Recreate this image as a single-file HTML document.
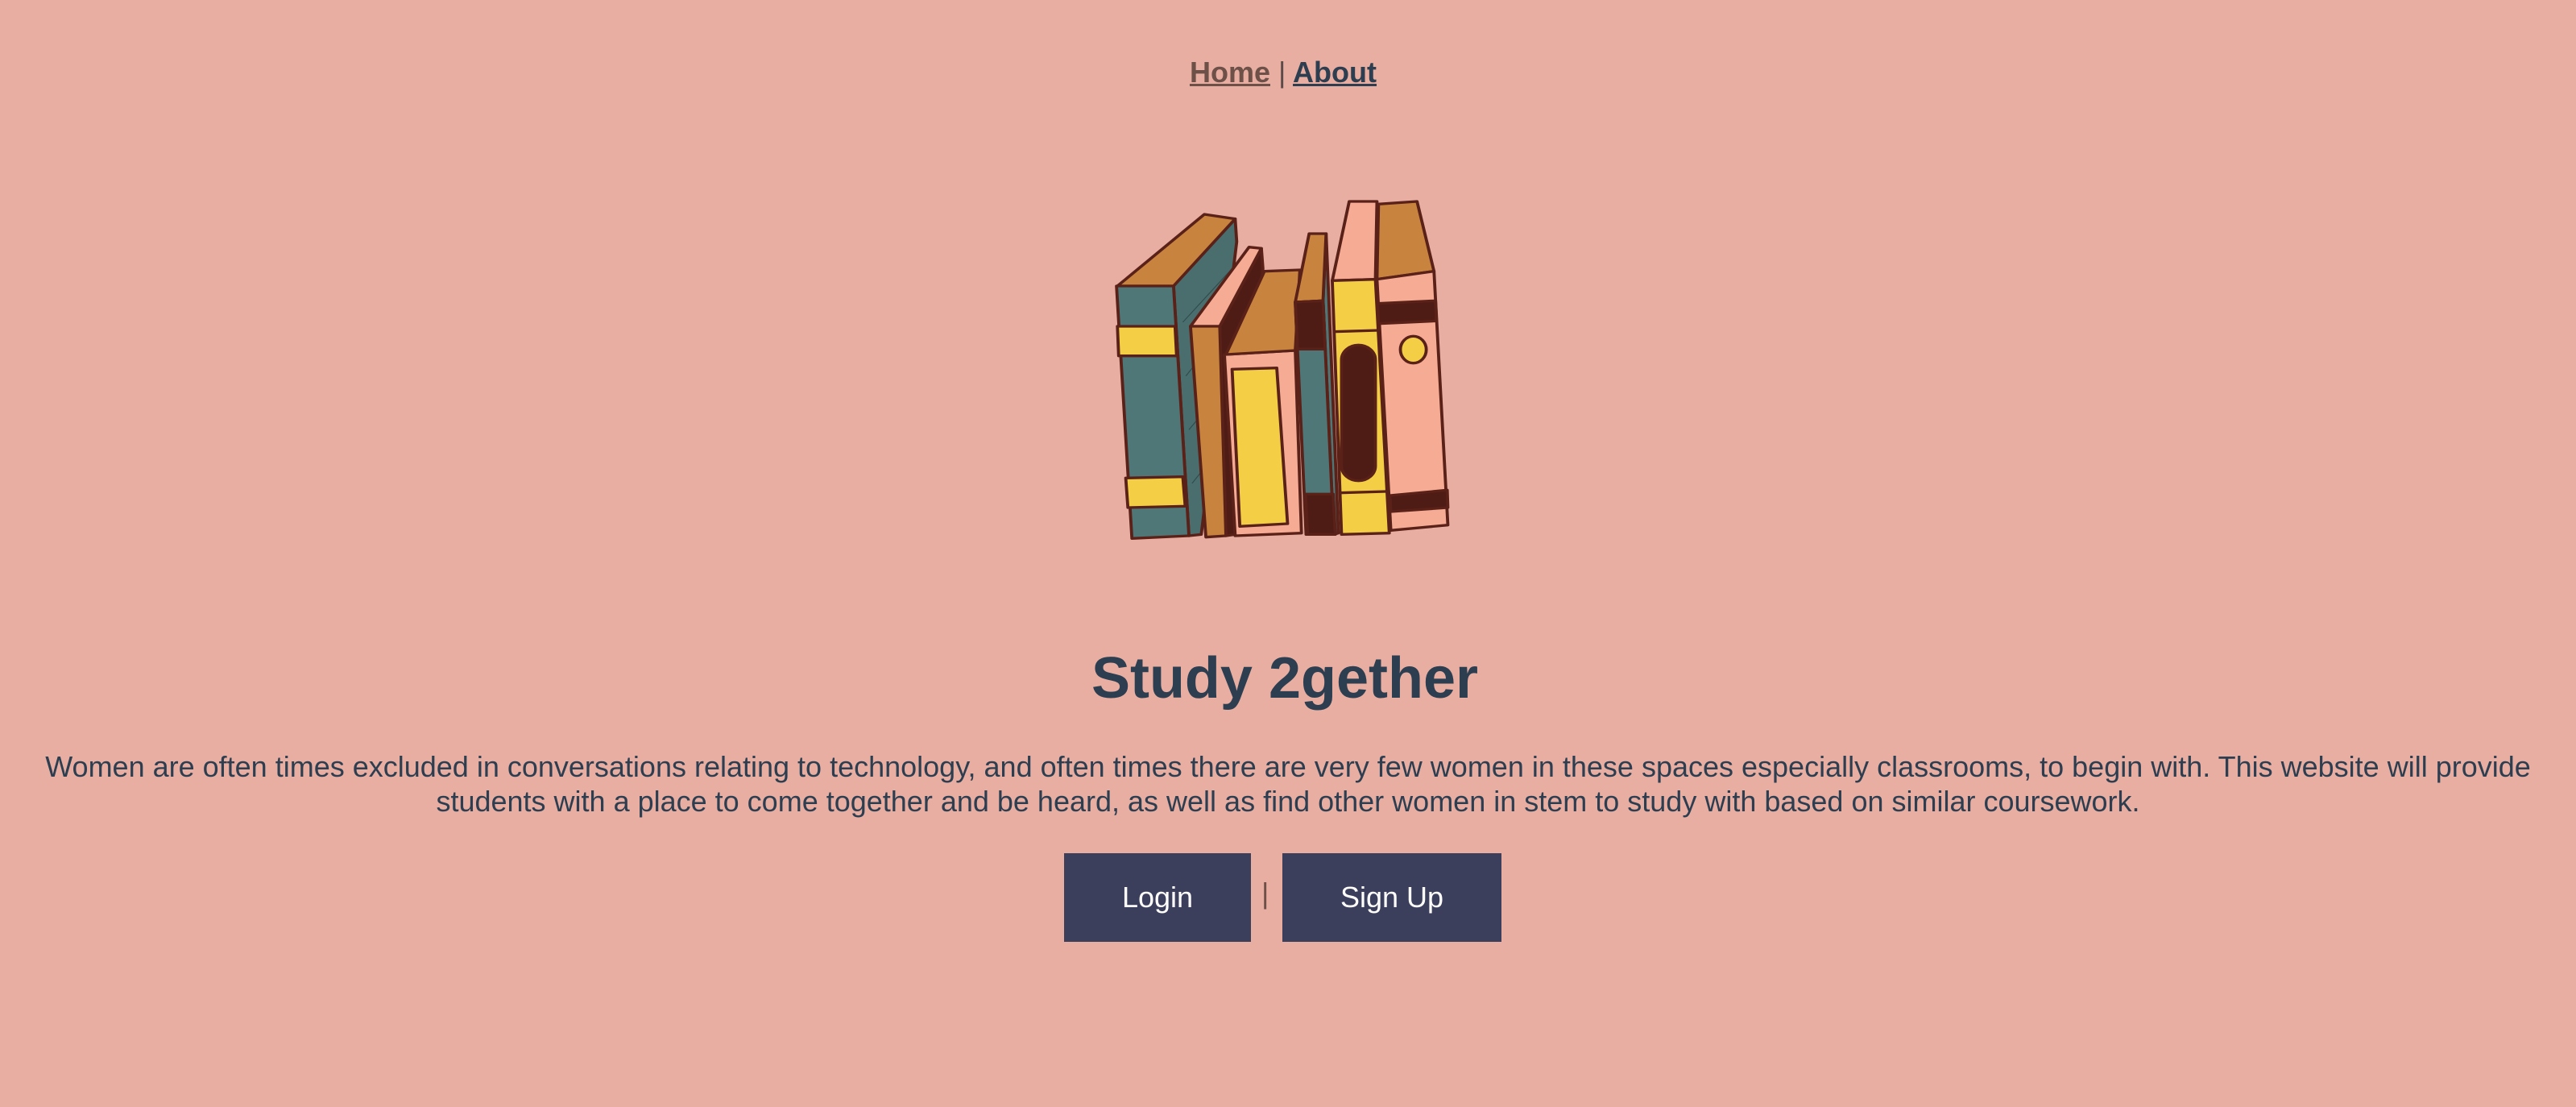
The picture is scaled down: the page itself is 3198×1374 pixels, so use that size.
<!DOCTYPE html>
<html><head><meta charset="utf-8"><style>
html,body{margin:0;padding:0;}
body{width:3198px;height:1374px;background:#e8aea2;font-family:"Liberation Sans",Arial,sans-serif;position:relative;overflow:hidden;color:#2c3e50;}
.nav{position:absolute;top:68px;left:-6px;width:3198px;text-align:center;font-size:36px;font-weight:bold;line-height:44px;color:#5a4a48;}
.nav a{text-decoration:underline;text-decoration-thickness:3px;}
.home{color:#6d5048;}
.about{color:#2c3e50;}
.sep{font-weight:normal;color:#5a4a48;}
h1{position:absolute;top:800px;left:-4px;width:3198px;margin:0;text-align:center;font-size:72px;line-height:84px;font-weight:bold;color:#2c3e50;}
p{position:absolute;top:930px;left:20px;width:3158px;margin:0;text-align:center;font-size:36px;line-height:43px;color:#2c3e50;}
.btn{position:absolute;top:1059px;height:110px;background:#3b3f5b;color:#fff;font-size:36px;line-height:110px;text-align:center;}
.bar{position:absolute;top:1088px;left:1566px;font-size:36px;color:#6d5048;}
</style></head><body>
<div class="nav"><a class="home">Home</a> <span class="sep">|</span> <a class="about">About</a></div>
<svg style="position:absolute;left:1300px;top:200px" width="600" height="500" viewBox="0 0 1568 1500" preserveAspectRatio="none">
<g stroke="#5a2119" stroke-width="10" stroke-linejoin="round">
<polygon points="410,465 610,215 615,300 500,1390 460,1395" fill="#4a6e6e"/>
<g stroke-width="3" stroke="#2f4a4a"><line x1="440" y1="600" x2="600" y2="400"/><line x1="450" y1="800" x2="590" y2="600"/><line x1="460" y1="1000" x2="570" y2="850"/><line x1="470" y1="1200" x2="540" y2="1100"/></g>
<polygon points="228,465 510,198 610,215 410,465" fill="#c8843e"/>
<polygon points="225,465 410,465 460,1395 275,1405" fill="#4f7777"/>
<polygon points="228,615 415,615 420,725 232,725" fill="#f4cf45"/>
<polygon points="255,1180 440,1175 448,1285 262,1290" fill="#f4cf45"/>
<polygon points="560,615 695,325 700,400 610,1390 580,1395" fill="#4e1c15"/>
<polygon points="465,615 655,320 695,325 560,615" fill="#f6ab94"/>
<polygon points="465,615 560,615 580,1395 515,1400" fill="#c8843e"/>
<polygon points="575,720 805,705 825,1385 610,1395" fill="#f6ab94"/>
<polygon points="600,775 745,770 780,1350 625,1360" fill="#f4cf45"/>
<polygon points="580,720 705,410 820,405 805,705" fill="#c8843e"/>
<polygon points="895,520 905,270 945,1385 930,1390" fill="#4f7777"/>
<polygon points="805,525 850,270 905,270 895,520" fill="#c8843e"/>
<polygon points="805,525 895,520 930,1390 840,1390" fill="#4f7777"/>
<polygon points="805,525 895,520 902,700 812,700" fill="#4e1c15"/>
<polygon points="838,1240 928,1240 935,1390 845,1390" fill="#4e1c15"/>
<polygon points="925,445 980,150 1070,150 1065,440" fill="#f6ab94"/>
<polygon points="925,445 1065,440 1110,1385 955,1390" fill="#f4cf45"/>
<line x1="928" y1="635" x2="1075" y2="630"/><line x1="950" y1="1235" x2="1100" y2="1230"/>
<rect x="955" y="685" width="110" height="505" rx="55" fill="#4e1c15"/>
<polygon points="1070,440 1075,160 1200,150 1255,410" fill="#c8843e"/>
<polygon points="1070,440 1255,410 1300,1355 1115,1375" fill="#f6ab94"/>
<polygon points="1072,530 1260,520 1263,595 1075,605" fill="#4e1c15"/>
<polygon points="1112,1245 1298,1225 1300,1290 1115,1305" fill="#4e1c15"/>
<ellipse cx="1188" cy="702" rx="42" ry="50" fill="#f4cf45"/>
</g>
</svg>
<h1>Study 2gether</h1>
<p>Women are often times excluded in conversations relating to technology, and often times there are very few women in these spaces especially classrooms, to begin with. This website will provide students with a place to come together and be heard, as well as find other women in stem to study with based on similar coursework.</p>
<div class="btn" style="left:1321px;width:232px">Login</div>
<div class="bar">|</div>
<div class="btn" style="left:1592px;width:272px">Sign Up</div>
</body></html>
